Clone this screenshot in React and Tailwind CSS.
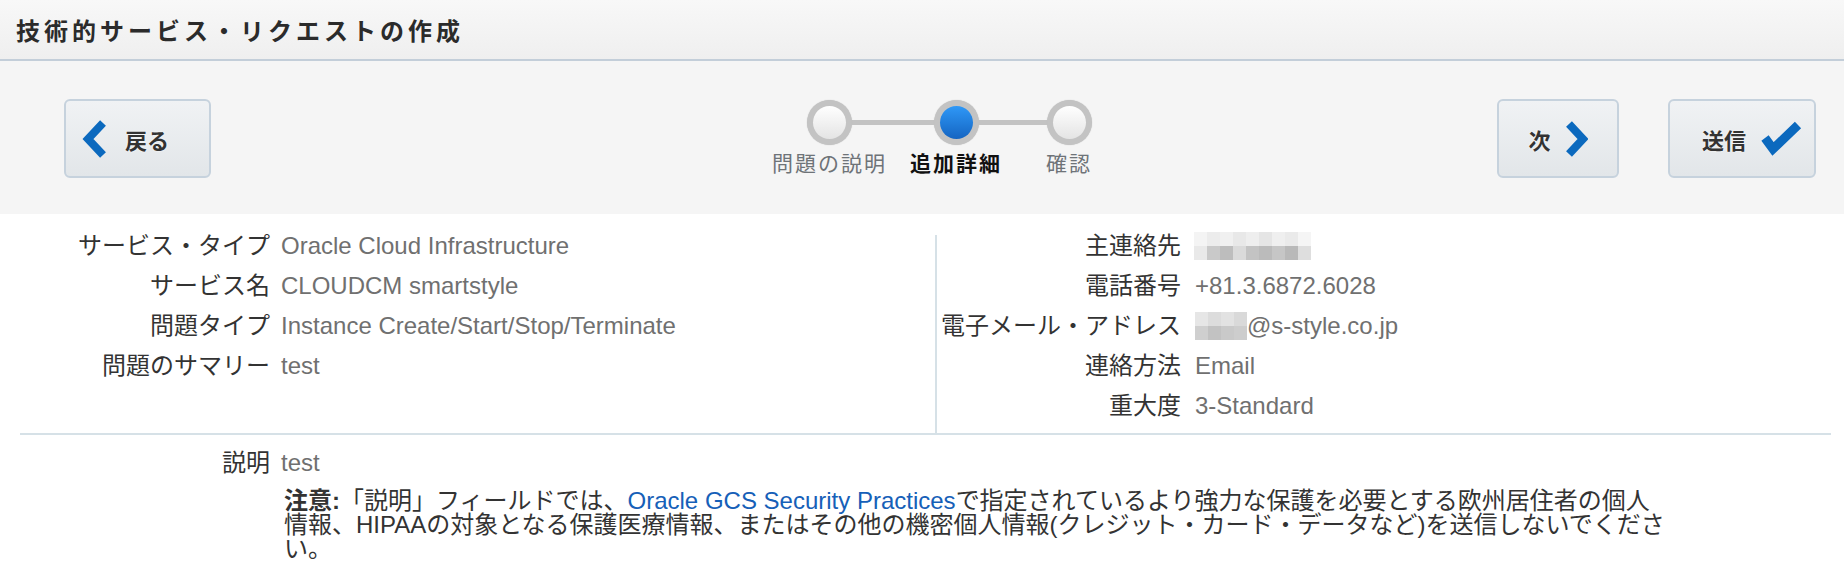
import React from "react";

const LABEL = "text-[#333333]";
const VALUE = "text-[#707070]";

function ChevronLeft() {
  return (
    <svg width="24" height="38" viewBox="0 0 24 38" className="shrink-0">
      <polyline points="21,3 6,19 21,35" fill="none" stroke="#0b69be" strokeWidth="8" strokeLinejoin="miter" />
    </svg>
  );
}

function ChevronRight() {
  return (
    <svg width="22" height="36" viewBox="0 0 22 36" className="shrink-0">
      <polyline points="3,3 17,18 3,33" fill="none" stroke="#0b69be" strokeWidth="8" strokeLinejoin="miter" />
    </svg>
  );
}

function Check() {
  return (
    <svg width="42" height="36" viewBox="0 0 42 36" className="shrink-0">
      <polyline points="5,17 13,28 38,4" fill="none" stroke="#0b69be" strokeWidth="9" strokeLinejoin="miter" />
    </svg>
  );
}

function Blur({ top, bottom }) {
  return (
    <span className="inline-flex flex-col h-[28px]">
      <span className="flex h-[14px]">
        {top.map((c, i) => (
          <span key={i} className="w-[13px] h-[14px]" style={{ background: c }} />
        ))}
      </span>
      <span className="flex h-[14px]">
        {bottom.map((c, i) => (
          <span key={i} className="w-[13px] h-[14px]" style={{ background: c }} />
        ))}
      </span>
    </span>
  );
}

function Step({ label, active, className = "" }) {
  return (
    <div className={"relative z-10 flex flex-col items-center " + className}>
      <div className="w-[45px] h-[45px] rounded-full bg-[#c3c3c3] p-[6px] shadow-[0_0_1px_#bbb]">
        {active ? (
          <div className="w-full h-full rounded-full bg-linear-to-b from-[#2f98f7] to-[#1565c2]" />
        ) : (
          <div className="w-full h-full rounded-full bg-linear-to-b from-[#ffffff] to-[#e4e4e4]" />
        )}
      </div>
      <div
        className={
          "mt-[4px] leading-[26px] text-[21px] tracking-[2px] whitespace-nowrap font-['Noto_Sans_CJK_JP',sans-serif] " +
          (active ? "font-bold text-[#111111]" : "text-[#6e7378]")
        }
      >
        {label}
      </div>
    </div>
  );
}

function Row({ label, children, labelW }) {
  return (
    <div className="flex h-[40px] items-center whitespace-nowrap">
      <div className={"shrink-0 text-right " + labelW + " " + LABEL}>{label}</div>
      {children}
    </div>
  );
}

const btn =
  "h-[79px] rounded-[6px] border-2 border-[#c6d2dd] bg-linear-to-b from-[#f0f2f4] to-[#e2e6e9] flex items-center shrink-0";
const btnText =
  "text-[22px] font-bold text-[#333333] font-['Noto_Sans_CJK_JP',sans-serif] [text-shadow:0_0_2px_#ffffff] leading-none";

export default function App() {
  return (
    <div className="w-[1844px] h-[572px] overflow-hidden bg-white font-['Liberation_Sans','Noto_Sans_CJK_JP',sans-serif]">
      {/* Title bar */}
      <div className="h-[61px] border-b-2 border-[#c3ced9] bg-linear-to-b from-[#f8f8f8] to-[#efefef] flex items-center pl-[16px]">
        <h1 className="text-[24px] font-bold tracking-[4px] text-[#2b2b2b] leading-none font-['Noto_Sans_CJK_JP',sans-serif]">
          技術的サービス・リクエストの作成
        </h1>
      </div>

      {/* Toolbar */}
      <div className="h-[153px] bg-[#f5f5f5] flex items-start pt-[38px]">
        <div className={btn + " ml-[64px] w-[147px] pl-[16px] gap-[19px]"}>
          <ChevronLeft />
          <span className={btnText}>戻る</span>
        </div>

        <div className="relative flex ml-[561px] mt-[1px]">
          <div className="absolute top-[20px] h-[5px] left-[57px] right-[23px] bg-[#c3c3c3]" />
          <Step label="問題の説明" />
          <Step label="追加詳細" active className="ml-[23px]" />
          <Step label="確認" className="ml-[44px]" />
        </div>

        <div className={btn + " ml-[405px] w-[122px] justify-center gap-[15px]"}>
          <span className={btnText}>次</span>
          <ChevronRight />
        </div>
        <div className={btn + " ml-[49px] w-[148px] pl-[32px] gap-[14px]"}>
          <span className={btnText}>送信</span>
          <Check />
        </div>
      </div>

      {/* Details */}
      <div className="flex pt-[12px] text-[24px]">
        <div className="w-[935px] shrink-0">
          <Row label="サービス・タイプ" labelW="w-[270px]">
            <span className={"ml-[11px] " + VALUE}>Oracle Cloud Infrastructure</span>
          </Row>
          <Row label="サービス名" labelW="w-[270px]">
            <span className={"ml-[11px] " + VALUE}>CLOUDCM smartstyle</span>
          </Row>
          <Row label="問題タイプ" labelW="w-[270px]">
            <span className={"ml-[11px] " + VALUE}>Instance Create/Start/Stop/Terminate</span>
          </Row>
          <Row label="問題のサマリー" labelW="w-[270px]">
            <span className={"ml-[11px] " + VALUE}>test</span>
          </Row>
        </div>
        <div className="w-[2px] bg-[#d6e1e7] mt-[9px] shrink-0" />
        <div className="flex-1 pb-[7px]">
          <Row label="主連絡先" labelW="w-[244px]">
            <span className="ml-[13px] flex">
              <Blur
                top={["#f4f4f4", "#ececec", "#f0f0f0", "#e8e8e8", "#eeeeee", "#e5e5e5", "#efefef", "#eaeaea", "#f5f5f5"]}
                bottom={["#e9e9e9", "#c9c9c9", "#bdbdbd", "#dadada", "#c3c3c3", "#bbbbbb", "#c6c6c6", "#b9b9b9", "#dedede"]}
              />
            </span>
          </Row>
          <Row label="電話番号" labelW="w-[244px]">
            <span className={"ml-[14px] " + VALUE}>+81.3.6872.6028</span>
          </Row>
          <Row label="電子メール・アドレス" labelW="w-[244px]">
            <span className={"ml-[14px] flex items-center " + VALUE}>
              <Blur
                top={["#e6e6e6", "#dcdcdc", "#e2e2e2", "#d9d9d9"]}
                bottom={["#cfcfcf", "#c2c2c2", "#c9c9c9", "#cdcdcd"]}
              />
              <span>@s-style.co.jp</span>
            </span>
          </Row>
          <Row label="連絡方法" labelW="w-[244px]">
            <span className={"ml-[14px] " + VALUE}>Email</span>
          </Row>
          <Row label="重大度" labelW="w-[244px]">
            <span className={"ml-[14px] " + VALUE}>3-Standard</span>
          </Row>
        </div>
      </div>
      <div className="h-[2px] bg-[#d6e1e7] ml-[20px] mr-[13px]" />

      {/* Description */}
      <div className="mt-[8px] text-[24px]">
        <Row label="説明" labelW="w-[270px]">
          <span className={"ml-[11px] " + VALUE}>test</span>
        </Row>
        <p className="ml-[284px] mt-[6px] leading-[24px] text-[#333333] whitespace-nowrap">
          <b className="font-bold">注意:</b>「説明」フィールドでは、
          <a className="text-[#1660b8]">Oracle GCS Security Practices</a>
          で指定されているより強力な保護を必要とする欧州居住者の個人
          <br />
          情報、HIPAAの対象となる保護医療情報、またはその他の機密個人情報(クレジット・カード・データなど)を送信しないでくださ
          <br />
          い。
        </p>
      </div>
    </div>
  );
}
